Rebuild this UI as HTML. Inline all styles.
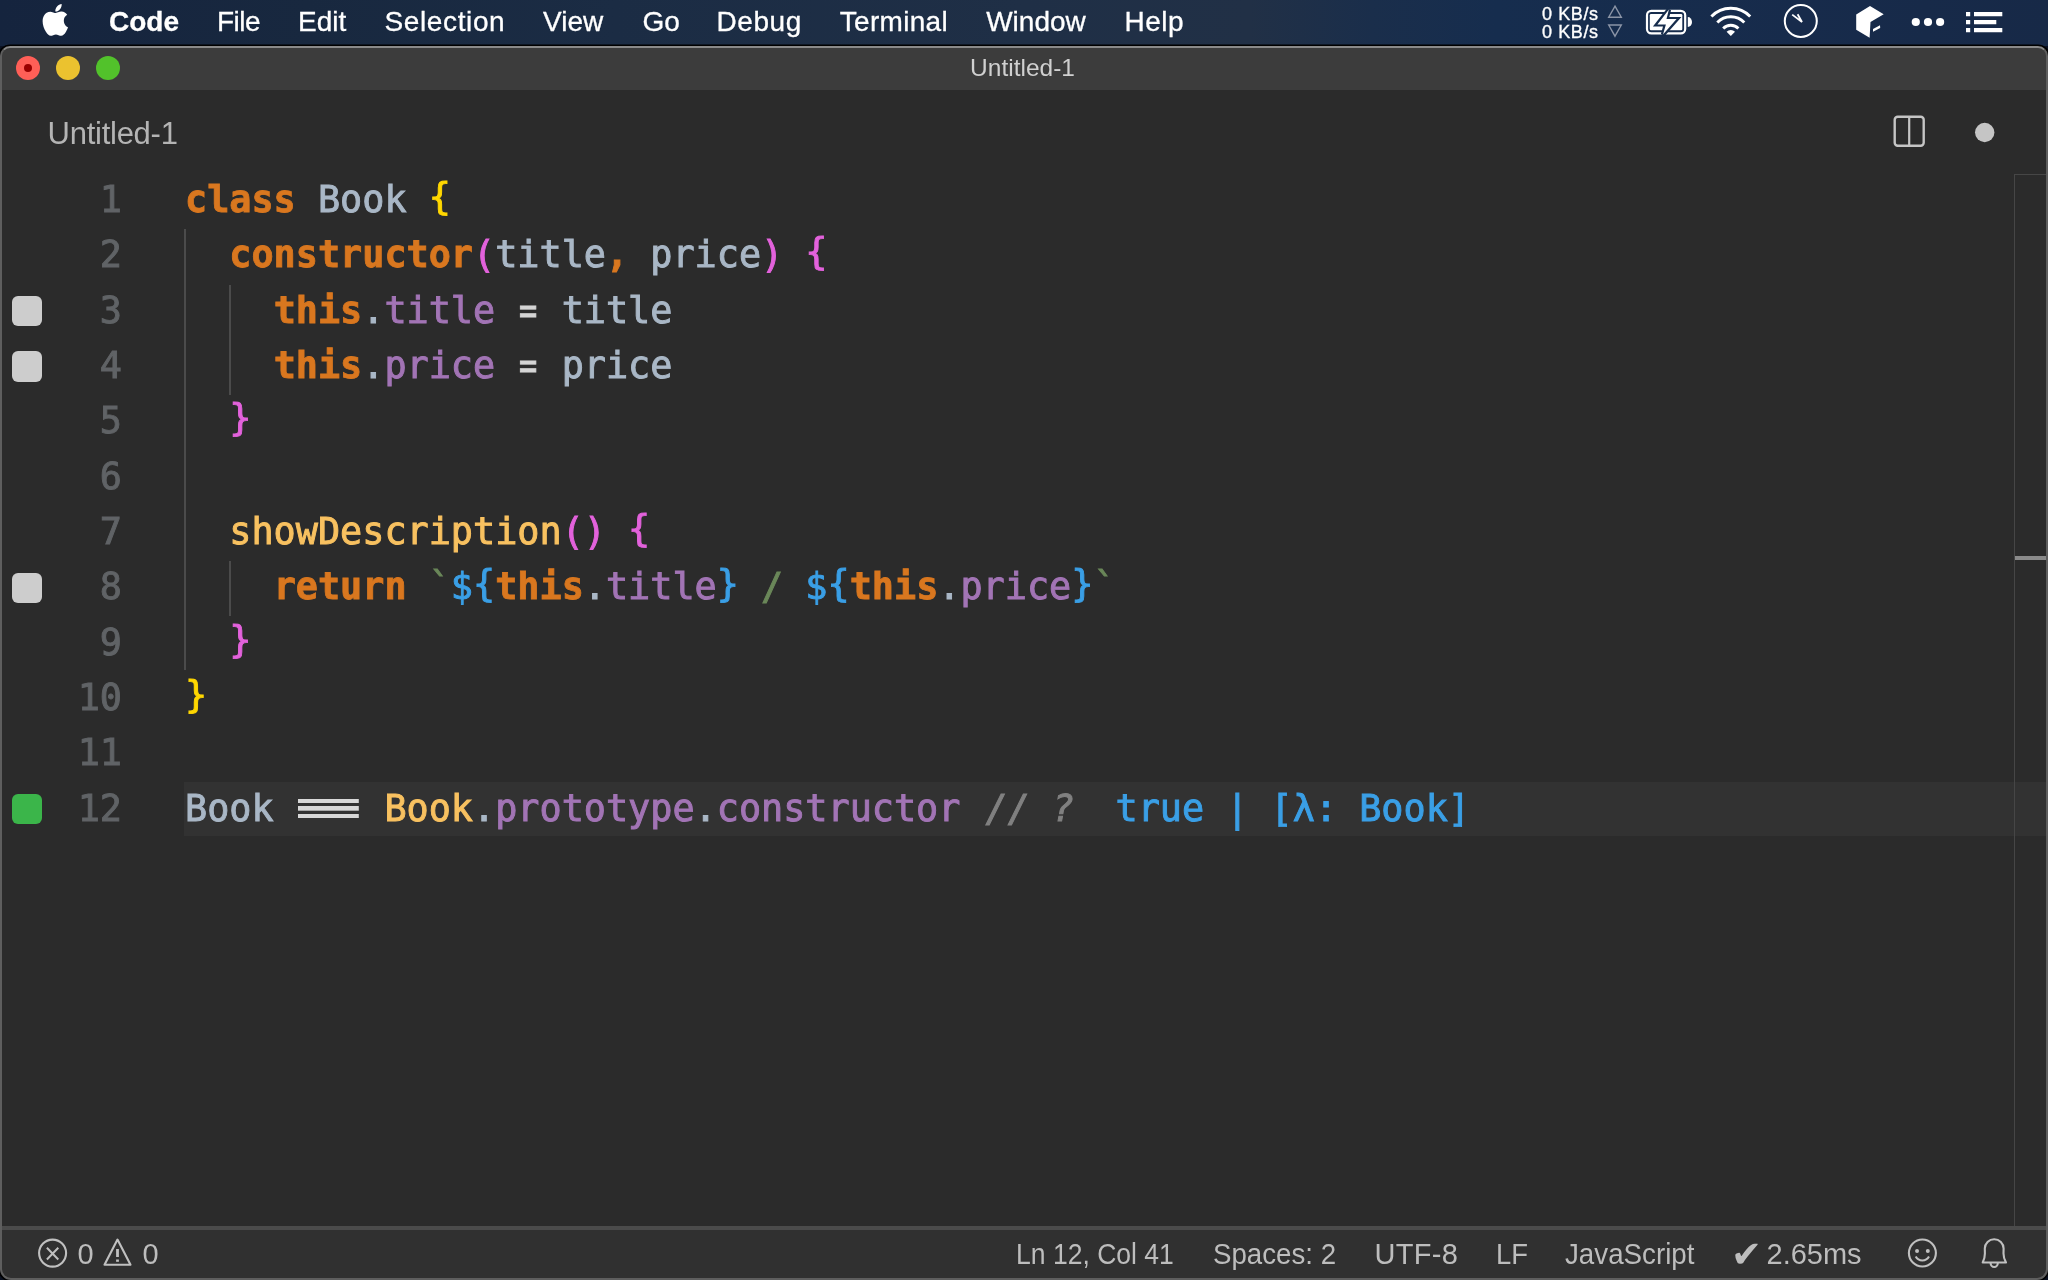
<!DOCTYPE html>
<html lang="en"><head><meta charset="utf-8"><title>Untitled-1</title>
<style>
*{box-sizing:border-box}
html,body{margin:0;padding:0}
body{width:2048px;height:1280px;overflow:hidden;position:relative;background:#0b1222;font-family:"Liberation Sans","DejaVu Sans",sans-serif;}
#menubar{position:absolute;left:0;top:0;width:2048px;height:46px;background:linear-gradient(90deg,#15243e 0%,#18283f 15%,#1b2c44 30%,#1f2f46 50%,#213046 61%,#1a2e4b 67%,#162d4e 73%,#172b4b 88%,#172947 100%);color:#fff;font-size:28px;line-height:44px;white-space:nowrap}
#menubar .mi{position:absolute;top:0;height:44px;-webkit-text-stroke:.3px #fff}
#menubar b{font-weight:bold}
#win{position:absolute;left:0;top:46px;width:2048px;height:1234px;background:#2b2b2b;border-radius:10px 10px 11px 11px;overflow:hidden;box-shadow:0 0 0 1.6px #000}
#titlebar{position:absolute;left:0;top:0;width:2048px;height:44px;background:#3c3c3c;border-top:2px solid #3c3c3c;color:#d0d0d0;font-size:24.5px;line-height:40px;text-align:center;text-indent:-1.5px}
.tl{position:absolute;top:8px;width:24px;height:24px;border-radius:50%}
#tabbar{position:absolute;left:0;top:44px;width:2048px;height:84px;background:#2b2b2b}
#tab{position:absolute;left:47.5px;top:0;line-height:88px;font-size:31px;letter-spacing:-.25px;color:#b4b4b4}
#frame{position:absolute;left:0;top:0;width:2048px;height:1234px;border:2px solid #5e5e5e;border-top-color:#8a8a8a;border-radius:10px 10px 11px 11px;pointer-events:none}
#editor{position:absolute;left:0;top:-46px;width:2048px;height:1280px;font-family:"DejaVu Sans Mono","Liberation Mono",monospace;font-size:36.8px;line-height:55.32px;white-space:pre}
.ln{position:absolute;left:0;width:122px;text-align:right;color:#606366;height:55.32px;-webkit-text-stroke:.95px currentColor}
.cl{position:absolute;left:185px;height:55.32px;color:#a9b7c6;-webkit-text-stroke:.95px currentColor}
.cl b{-webkit-text-stroke:.8px currentColor}
.cl b,.cl i,.cl span{font-family:inherit}
.k{color:#d9771f;font-weight:bold}
.t{color:#a9b7c6}
.b1{color:#ffd700}
.b2{color:#e362dc}
.b3{color:#3a9fe6}
.c{color:#d9771f;font-weight:bold}
.p{color:#a274b5}
.o{color:#d4d4d4;display:inline-block;transform:scaleX(.82)}
.eq{transform:none;color:transparent;-webkit-text-stroke:0;background:linear-gradient(#d8d8d8,#d8d8d8) 0 18.3px/60.8px 4.3px no-repeat,linear-gradient(#d8d8d8,#d8d8d8) 0 25.1px/60.8px 4.7px no-repeat,linear-gradient(#d8d8d8,#d8d8d8) 0 33px/60.8px 4.3px no-repeat;display:inline-block;height:55.32px;vertical-align:top;margin-left:2.2px;margin-right:-2.2px}
.f{color:#f8c160}
.s{color:#6a8759}
.cm{color:#808080;font-style:italic;position:relative;left:3px}
.q{color:#3a9fe6}
.curline{position:absolute;left:184px;width:1864px;height:53.7px;background:#323232}
.sq{position:absolute;left:11.9px;width:30.6px;height:30.5px;border-radius:6px;background:#cdcdcd}
.sq.g{background:#3bb54a}
.ig{position:absolute;width:2.2px;margin-left:-1px;background:#4b4b4b}
#ruler{position:absolute;left:2014px;top:128px;width:34px;height:1052px;border-left:1px solid #464646;border-top:1px solid #464646}
#rmark{position:absolute;left:2015px;top:510px;width:32px;height:4px;background:#8a8a8a}
#status{position:absolute;left:0;top:1180px;width:2048px;height:54px;background:#303030;border-top:4px solid #4b4b4b;color:#bdbdbd;font-size:29px;line-height:48px;white-space:nowrap}
#status .si{position:absolute;top:0}
#mbicons{position:absolute;left:0;top:0}
.kb{position:absolute;left:1542px;font-size:18px;line-height:18px;letter-spacing:.6px;color:#fff;-webkit-text-stroke:.35px #fff}
.tl i{position:absolute;left:8px;top:8px;width:8px;height:8px;border-radius:50%;background:#990000}
#editor,#menubar .mi,.kb,#titlebar span,#tab,#status .si{transform:translateZ(0)}
#titlebar span{display:inline-block}
.ck{display:inline-block;width:31px;margin-left:-2px;margin-right:-3.56px;font-size:37px;line-height:48px;vertical-align:top;margin-top:1px;font-family:"DejaVu Sans","Liberation Sans",sans-serif}
.br{position:relative;top:-3px}
.sx{transform-origin:0 50%}
</style></head>
<body>
<div id="menubar">
<span class="mi" style="left:109px"><b>Code</b></span>
<span class="mi" style="left:217px;letter-spacing:-.5px">File</span>
<span class="mi" style="left:298px">Edit</span>
<span class="mi" style="left:384.5px;letter-spacing:.62px">Selection</span>
<span class="mi" style="left:543px">View</span>
<span class="mi" style="left:642.4px">Go</span>
<span class="mi" style="left:716.4px;letter-spacing:.6px">Debug</span>
<span class="mi" style="left:839.8px;letter-spacing:.3px">Terminal</span>
<span class="mi" style="left:986.2px">Window</span>
<span class="mi" style="left:1124.5px;letter-spacing:.5px">Help</span>
<span class="kb" style="top:5px">0 KB/s</span>
<span class="kb" style="top:23px">0 KB/s</span>
<svg id="mbicons" width="2048" height="46" viewBox="0 0 2048 46">
<!-- apple -->
<g transform="translate(39.5,3.3) scale(0.186,0.196)" fill="#fff"><path d="M150.37 130.25c-2.45 5.66-5.35 10.87-8.71 15.66-4.58 6.53-8.33 11.05-11.22 13.56-4.48 4.12-9.28 6.23-14.42 6.35-3.69 0-8.14-1.05-13.32-3.18-5.197-2.12-9.973-3.17-14.34-3.17-4.58 0-9.492 1.05-14.746 3.17-5.262 2.13-9.501 3.24-12.742 3.35-4.929.21-9.842-1.96-14.746-6.52-3.13-2.73-7.045-7.41-11.735-14.04-5.032-7.08-9.169-15.29-12.41-24.65-3.471-10.11-5.211-19.9-5.211-29.378 0-10.857 2.346-20.221 7.045-28.068 3.693-6.303 8.606-11.275 14.755-14.925s12.793-5.51 19.948-5.629c3.915 0 9.049 1.211 15.429 3.591 6.362 2.388 10.447 3.599 12.238 3.599 1.339 0 5.877-1.416 13.57-4.239 7.275-2.618 13.415-3.702 18.445-3.275 13.63 1.1 23.87 6.473 30.68 16.153-12.19 7.386-18.22 17.731-18.1 31.002.11 10.337 3.86 18.939 11.23 25.769 3.34 3.17 7.07 5.62 11.22 7.36-.9 2.61-1.85 5.11-2.86 7.51zM119.11 7.24c0 8.102-2.96 15.667-8.86 22.669-7.12 8.324-15.732 13.134-25.071 12.375a25.222 25.222 0 0 1-.188-3.07c0-7.778 3.386-16.102 9.399-22.908 3.002-3.446 6.82-6.311 11.45-8.597 4.62-2.252 8.99-3.497 13.1-3.71.12 1.083.17 2.166.17 3.24z"/></g>
<!-- net arrows -->
<path d="M1615 6.2 L1621.3 17.2 L1608.7 17.2 Z M1615 36.2 L1621.3 25 L1608.7 25 Z" fill="none" stroke="#8b94a6" stroke-width="1.4" stroke-linejoin="miter"/>
<!-- battery -->
<rect x="1647" y="10.8" width="38.2" height="22.6" rx="4.4" ry="4.4" fill="none" stroke="#fff" stroke-width="2.2"/>
<rect x="1649.8" y="14" width="32.5" height="16.2" rx="1.2" fill="#fff"/>
<path d="M1687.8 16.9 a4.2 5.1 0 0 1 0 10.2 z" fill="#fff"/>
<path d="M1668.9 9.6 L1657.4 24.4 L1665.9 24.4 L1663 34.6 L1676.6 19.1 L1666.5 19.1 Z" fill="#fff" stroke="#162c4c" stroke-width="4.4" stroke-linejoin="miter" stroke-miterlimit="3" paint-order="stroke"/>
<!-- wifi -->
<g fill="none" stroke="#fff" stroke-width="2.9" stroke-linecap="butt">
<path d="M1711.4 16.6 A26.8 26.8 0 0 1 1750.2 16.6"/>
<path d="M1717.3 22.6 A18.6 18.6 0 0 1 1744.3 22.6"/>
<path d="M1723.2 28.4 A10.6 10.6 0 0 1 1738.4 28.4"/>
</g>
<path d="M1730.8 36 L1726.6 31.8 A5.9 5.9 0 0 1 1735 31.8 Z" fill="#fff"/>
<!-- clock -->
<circle cx="1800.8" cy="21" r="16" fill="none" stroke="#fff" stroke-width="2"/>
<path d="M1792.2 14.6 L1802 22 L1797.6 14.2" fill="none" stroke="#fff" stroke-width="1.8" stroke-linejoin="miter"/>
<!-- cube -->
<path d="M1870 6 L1883.7 14.2 L1870.5 22 L1869.6 37.7 L1856.2 29.8 L1856.2 14.6 Z" fill="#fff"/>
<path d="M1873 28.9 L1880 25.2 L1880.2 27.9 L1873 31.8 Z" fill="#fff"/>
<!-- dots -->
<circle cx="1915.8" cy="22" r="4.1" fill="#fff"/><circle cx="1928" cy="22" r="4.1" fill="#fff"/><circle cx="1940.1" cy="22" r="4.1" fill="#fff"/>
<!-- list -->
<path d="M1966 12h4.2v4.2h-4.2z M1966 20h4.2v4.2h-4.2z M1966 28h4.2v4.2h-4.2z M1974 12h28.3v4.2h-28.3z M1974 20h22.3v4.2h-22.3z M1974 28h28.3v4.2h-28.3z" fill="#fff"/>
</svg>
</div>
<div id="win">
<div id="titlebar"><span>Untitled-1</span>
<div class="tl" style="left:16px;background:#ff5f57"><i></i></div>
<div class="tl" style="left:56px;background:#ebc22f"></div>
<div class="tl" style="left:96px;background:#52c22b"></div>
</div>
<div id="tabbar"><div id="tab">Untitled-1</div>
<svg id="tabicons" width="200" height="84" viewBox="1848 90 200 84" style="position:absolute;left:1848px;top:0">
<rect x="1894.7" y="116.8" width="29" height="29" rx="3" fill="none" stroke="#c5c5c5" stroke-width="2.4"/>
<path d="M1909.2 117 V146" stroke="#c5c5c5" stroke-width="2.2" fill="none"/>
<circle cx="1984.7" cy="132.5" r="9.7" fill="#c5c5c5"/>
</svg>
</div>
<div id="editor">
<div class="curline" style="top:782.10px"></div>
<div class="ln" style="top:172.10px">1</div>
<div class="cl" style="top:172.10px"><b class="k">class</b> <span class="t">Book</span> <span class="b1 br">{</span></div>
<div class="ln" style="top:227.42px">2</div>
<div class="cl" style="top:227.42px">  <b class="k">constructor</b><span class="b2">(</span><span class="t">title</span><span class="c">,</span> <span class="t">price</span><span class="b2">)</span> <span class="b2 br">{</span></div>
<div class="ln" style="top:282.74px">3</div>
<div class="cl" style="top:282.74px">    <b class="k">this</b><span class="t">.</span><span class="p">title</span> <span class="o">=</span> <span class="t">title</span></div>
<div class="ln" style="top:338.06px">4</div>
<div class="cl" style="top:338.06px">    <b class="k">this</b><span class="t">.</span><span class="p">price</span> <span class="o">=</span> <span class="t">price</span></div>
<div class="ln" style="top:393.38px">5</div>
<div class="cl" style="top:393.38px">  <span class="b2 br">}</span></div>
<div class="ln" style="top:448.70px">6</div>
<div class="cl" style="top:448.70px"></div>
<div class="ln" style="top:504.02px">7</div>
<div class="cl" style="top:504.02px">  <span class="f">showDescription</span><span class="b2">()</span> <span class="b2 br">{</span></div>
<div class="ln" style="top:559.34px">8</div>
<div class="cl" style="top:559.34px">    <b class="k">return</b> <span class="s">`</span><span class="b3">$<span class="br">{</span></span><b class="k">this</b><span class="t">.</span><span class="p">title</span><span class="b3 br">}</span><span class="s"> / </span><span class="b3">$<span class="br">{</span></span><b class="k">this</b><span class="t">.</span><span class="p">price</span><span class="b3 br">}</span><span class="s">`</span></div>
<div class="ln" style="top:614.66px">9</div>
<div class="cl" style="top:614.66px">  <span class="b2 br">}</span></div>
<div class="ln" style="top:669.98px">10</div>
<div class="cl" style="top:669.98px"><span class="b1 br">}</span></div>
<div class="ln" style="top:725.30px">11</div>
<div class="cl" style="top:725.30px"></div>
<div class="ln" style="top:780.62px">12</div>
<div class="cl" style="top:780.62px"><span class="t">Book</span> <span class="o eq">===</span> <span class="f">Book</span><span class="t">.</span><span class="p">prototype</span><span class="t">.</span><span class="p">constructor</span> <i class="cm">// ?</i><span class="q">  true | [λ: Book]</span></div>
<div class="sq" style="top:295.94px"></div>
<div class="sq" style="top:351.26px"></div>
<div class="sq" style="top:572.54px"></div>
<div class="sq g" style="top:793.82px"></div>
<div class="ig" style="left:185px;top:229.22px;height:440.7px"></div>
<div class="ig" style="left:230px;top:284.54px;height:110.04px"></div>
<div class="ig" style="left:230px;top:561.14px;height:54.72px"></div>
</div>
<div id="ruler"></div><div id="rmark"></div>
<div id="status">
<span class="si" style="left:77.5px">0</span>
<span class="si" style="left:142.5px">0</span>
<span class="si sx" style="left:1016.3px;transform:translateZ(0) scaleX(.915)">Ln 12, Col 41</span>
<span class="si sx" style="left:1212.5px;transform:translateZ(0) scaleX(.954)">Spaces: 2</span>
<span class="si" style="left:1374.5px;letter-spacing:.3px">UTF-8</span>
<span class="si sx" style="left:1495.5px;transform:translateZ(0) scaleX(.945)">LF</span>
<span class="si sx" style="left:1564.5px;transform:translateZ(0) scaleX(.956)">JavaScript</span>
<span class="si" style="left:1733px"><span class="ck">✔</span> 2.65ms</span>
<svg id="sticons" width="2048" height="54" viewBox="0 1226 2048 54" style="position:absolute;left:0;top:-4px">
<g fill="none" stroke="#c0c0c0" stroke-width="2.1">
<circle cx="52.6" cy="1253.1" r="13.5"/>
<path d="M46.9 1247.8 L58.3 1259.5 M58.3 1247.8 L46.9 1259.5" stroke-width="2"/>
<path d="M117.5 1239.6 L130.5 1264.8 L104.5 1264.8 Z" stroke-linejoin="round"/>
<circle cx="1922.4" cy="1253" r="13.5"/>
<path d="M1915.7 1256.6 A7.6 7.6 0 0 0 1929 1256.6"/>
<path d="M1982.7 1262.5 C1984.3 1259.3 1984.9 1257 1984.9 1253.5 L1984.8 1248.6 A9.4 9.3 0 0 1 2003.6 1248.6 L2003.5 1253.5 C2003.5 1257 2004.2 1259.3 2006 1262.5 Z" stroke-linejoin="round"/>
<path d="M1990.6 1263 A3.6 4 0 0 0 1997.8 1263"/>
</g>
<g fill="#c0c0c0"><circle cx="1917.05" cy="1251.05" r="2"/><circle cx="1927.8" cy="1251.05" r="2"/>
<rect x="116.1" y="1249" width="2.8" height="8"/><rect x="116.1" y="1259.5" width="2.8" height="2.3"/></g>
</svg>
</div>
<div id="frame"></div>
</div>
</body></html>
